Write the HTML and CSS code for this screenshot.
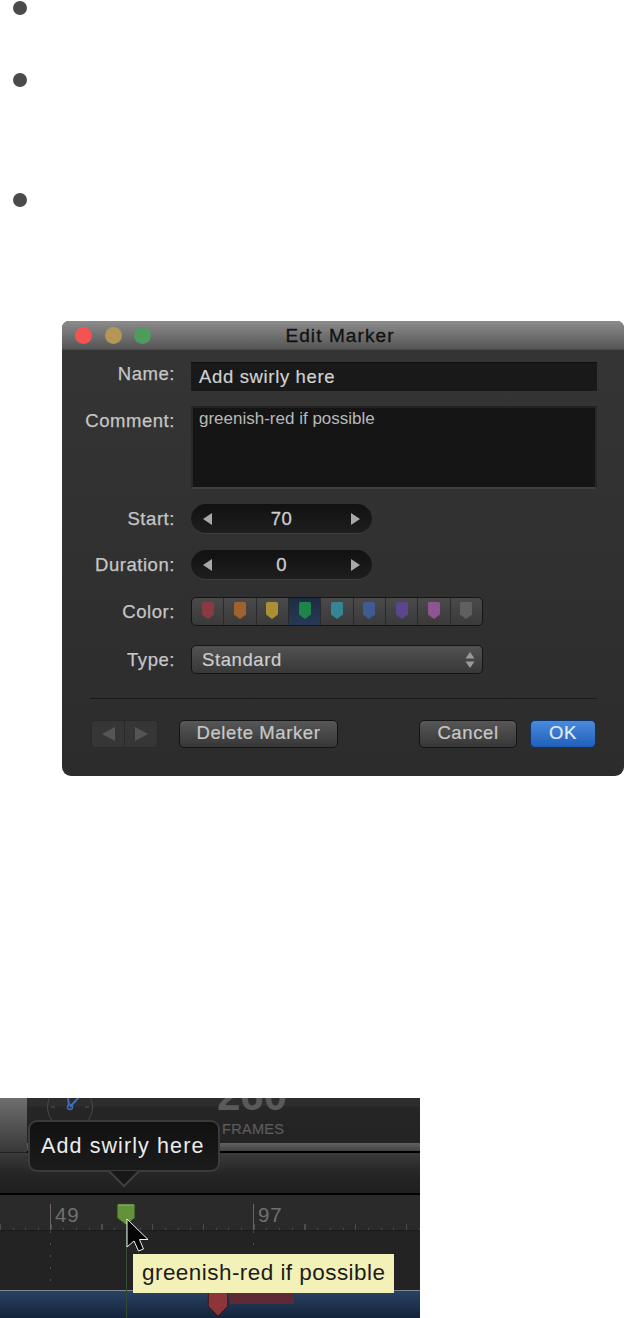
FILE: index.html
```html
<!DOCTYPE html>
<html lang="en">
<head>
<meta charset="utf-8">
<title>Edit Marker</title>
<link rel="stylesheet" href="styles.css">
</head>
<body>
<ul class="bullets">
  <li class="b1"></li>
  <li class="b2"></li>
  <li class="b3"></li>
</ul>

<section class="dialog">
  <header class="titlebar">
    <span class="light red"></span><span class="light amber"></span><span class="light green"></span>
    <h1 class="title">Edit Marker</h1>
  </header>
  <div class="form">
    <div class="row row-name">
      <label class="label">Name:</label>
      <div class="field name-field">Add swirly here</div>
    </div>
    <div class="row row-comment">
      <label class="label label-comment">Comment:</label>
      <div class="field comment-field">greenish-red if possible</div>
    </div>
    <div class="row row-start">
      <label class="label">Start:</label>
      <div class="stepper"><span class="arrow-l"></span><span class="step-val">70</span><span class="arrow-r"></span></div>
    </div>
    <div class="row row-dur">
      <label class="label">Duration:</label>
      <div class="stepper"><span class="arrow-l"></span><span class="step-val">0</span><span class="arrow-r"></span></div>
    </div>
    <div class="row row-color">
      <label class="label">Color:</label>
      <div class="swatches">
        <span class="cell"><svg class="flag" viewBox="0 0 12 17"><path fill="#8a3a40" d="M0 1.500Q0 0 1.500 0H10.500Q12 0 12 1.500V12.500L6 17L0 12.500Z"/></svg></span>
        <span class="cell"><svg class="flag" viewBox="0 0 12 17"><path fill="#a0632f" d="M0 1.500Q0 0 1.500 0H10.500Q12 0 12 1.500V12.500L6 17L0 12.500Z"/></svg></span>
        <span class="cell"><svg class="flag" viewBox="0 0 12 17"><path fill="#ab8f33" d="M0 1.500Q0 0 1.500 0H10.500Q12 0 12 1.500V12.500L6 17L0 12.500Z"/></svg></span>
        <span class="cell cell-on"><svg class="flag" viewBox="0 0 12 17"><path fill="#1d8549" d="M0 1.500Q0 0 1.500 0H10.500Q12 0 12 1.500V12.500L6 17L0 12.500Z"/></svg></span>
        <span class="cell"><svg class="flag" viewBox="0 0 12 17"><path fill="#368594" d="M0 1.500Q0 0 1.500 0H10.500Q12 0 12 1.500V12.500L6 17L0 12.500Z"/></svg></span>
        <span class="cell"><svg class="flag" viewBox="0 0 12 17"><path fill="#405a94" d="M0 1.500Q0 0 1.500 0H10.500Q12 0 12 1.500V12.500L6 17L0 12.500Z"/></svg></span>
        <span class="cell"><svg class="flag" viewBox="0 0 12 17"><path fill="#5a468c" d="M0 1.500Q0 0 1.500 0H10.500Q12 0 12 1.500V12.500L6 17L0 12.500Z"/></svg></span>
        <span class="cell"><svg class="flag" viewBox="0 0 12 17"><path fill="#8f5593" d="M0 1.500Q0 0 1.500 0H10.500Q12 0 12 1.500V12.500L6 17L0 12.500Z"/></svg></span>
        <span class="cell"><svg class="flag" viewBox="0 0 12 17"><path fill="#606062" d="M0 1.500Q0 0 1.500 0H10.500Q12 0 12 1.500V12.500L6 17L0 12.500Z"/></svg></span>
      </div>
    </div>
    <div class="row row-type">
      <label class="label">Type:</label>
      <div class="select">
        <span>Standard</span>
        <svg class="updown" viewBox="0 0 10 16"><path fill="#9a9a9a" d="M5 0L9.500 6.500H.5ZM.5 9.500H9.500L5 16Z"/></svg>
      </div>
    </div>
    <hr class="rule">
    <div class="actions">
      <div class="nav">
        <span class="nav-half"><span class="nav-l"></span></span>
        <span class="nav-half"><span class="nav-r"></span></span>
      </div>
      <button class="btn btn-delete">Delete Marker</button>
      <span class="spring"></span>
      <button class="btn btn-cancel">Cancel</button>
      <button class="btn btn-ok">OK</button>
    </div>
  </div>
</section>

<section class="timeline">
  <div class="band-top">
    <div class="grey-box"></div>
    <div class="top-panel">
      <svg class="clock" viewBox="0 0 48 48"><circle cx="24" cy="9" r="22.500" fill="none" stroke="#484848" stroke-width="1"/><path d="M5 9H9M39 9H43" stroke="#555"/><path d="M24 9L33 -1M22 0L23 7" stroke="#3f6fb5" stroke-width="2" fill="none"/><circle cx="24" cy="9" r="2.500" fill="none" stroke="#3f6fb5" stroke-width="1.500"/></svg>
      <span class="count">260</span>
      <span class="frames">FRAMES</span>
    </div>
  </div>
  <div class="band-bar"></div>
  <div class="band-grad"></div>
  <div class="band-ruler">
    <span class="major m1">49</span>
    <span class="major m2">97</span>
  </div>
  <div class="band-track"></div>
  <div class="band-clip"><span class="clip-red"></span></div>

  <div class="bubble">Add swirly here</div>
  <svg class="bubble-tail" viewBox="0 0 32 17"><path d="M1 0L16 15L31 0" fill="#171717" stroke="#3f3f3f" stroke-width="2"/></svg>
  <span class="playhead"></span>
  <svg class="marker-green" viewBox="0 0 20 23"><path fill="#63923b" stroke="#2a3a1c" d="M1 2Q1 1 2 1H18Q19 1 19 2V15L10 22L1 15Z"/><path d="M2 2H18" stroke="#8fb86a"/></svg>
  <svg class="marker-red" viewBox="0 0 22 28"><path fill="#8e353a" stroke="#3a1a1c" d="M1 0H21V17L11 27L1 17Z"/></svg>
  <svg class="cursor" viewBox="0 0 24 36"><path fill="#050505" stroke="#f4f4f4" stroke-width="1" stroke-linejoin="round" d="M1 1V29L8 23L12.500 33L17.500 31L13.500 21.500H22Z"/></svg>
  <div class="hint">greenish-red if possible</div>
</section>
</body>
</html>
```
FILE: styles.css
```css
* { box-sizing: border-box; }
html, body { margin: 0; padding: 0; background: #fff; }
body {
  width: 625px;
  height: 1318px;
  overflow: hidden;
  font-family: "Liberation Sans", Arial, sans-serif;
}

/* bullets */
.bullets { list-style: none; margin: 0; padding: 1px 0 0 13px; }
.bullets li { width: 14px; height: 14px; border-radius: 50%; background: #4b4b4b; }
.b2 { margin-top: 58px; }
.b3 { margin-top: 106px; }

/* dialog */
.dialog {
  margin: 114px 0 0 62px;
  width: 562px;
  height: 455px;
  border-radius: 7px 7px 9px 9px;
  overflow: hidden;
  background: linear-gradient(#353535, #2c2c2c);
}
.titlebar {
  height: 29px;
  display: flex;
  align-items: center;
  gap: 12.500px;
  padding-left: 13px;
  position: relative;
  background: linear-gradient(#8c8c8c, #565656);
  border-bottom: 1px solid #4a4a4a;
}
.light { width: 17px; height: 17px; border-radius: 50%; }
.light.red { background: #f65252; }
.light.amber { background: #b79458; }
.light.green { background: #4f9b5e; }
.title {
  position: absolute;
  left: 0; right: 6px; top: 4px;
  margin: 0;
  text-align: center;
  font-size: 19px;
  line-height: 22px;
  font-weight: 400;
  color: #111;
  letter-spacing: 1.100px;
  -webkit-text-stroke: .3px #111;
}
.form { padding: 12px 27px 0 0; }
.row { display: flex; align-items: center; }
.label {
  width: 113px;
  margin-right: 16px;
  text-align: right;
  font-size: 18.500px;
  letter-spacing: .55px;
  color: #c6c6c6;
  flex: none;
  -webkit-text-stroke: .25px #c6c6c6;
}
.row-name .label { padding-bottom: 6px; }
.field { background: #191919; color: #d0d0d0; }
.name-field {
  width: 406px;
  height: 29px;
  padding: 3px 0 0 8px;
  font-size: 18.500px;
  line-height: 21px;
  letter-spacing: .65px;
  border-top: 1px solid #0f0f0f;
  -webkit-text-stroke: .2px #d0d0d0;
}
.row-comment { margin-top: 15px; align-items: flex-start; }
.label-comment { padding-top: 4px; }
.comment-field {
  width: 407px;
  height: 83px;
  padding: 1px 0 0 6px;
  font-size: 17px;
  line-height: 20px;
  color: #b9b9b9;
  background: #151515;
  border: 2px solid #282828;
  border-top-color: #222;
  border-bottom-color: #404040;
}
.row-start { margin-top: 15px; }
.row-dur { margin-top: 16px; }
.stepper {
  width: 181px;
  height: 30px;
  border-radius: 15px;
  background: linear-gradient(#111, #1e1e1e);
  border-bottom: 1px solid #3f3f3f;
  display: flex;
  align-items: center;
  justify-content: space-between;
  padding: 0 12px;
}
.step-val { font-size: 18.500px; color: #cfcfcf; letter-spacing: .4px; -webkit-text-stroke: .3px #cfcfcf; }
.arrow-l, .arrow-r, .nav-l, .nav-r { display: block; width: 0; height: 0; border-style: solid; }
.arrow-l { border-width: 6px 9px 6px 0; border-color: transparent #a8a8a8 transparent transparent; }
.arrow-r { border-width: 6px 0 6px 9px; border-color: transparent transparent transparent #a8a8a8; }

.row-color { margin-top: 17px; }
.swatches {
  width: 292px;
  height: 29px;
  display: flex;
  border: 1px solid #151515;
  border-radius: 5px;
  overflow: hidden;
  background: linear-gradient(#4a4a4a, #3a3a3a);
}
.cell {
  flex: 1;
  display: flex;
  justify-content: center;
  padding-top: 4px;
  border-right: 1px solid #2a2a2a;
}
.cell:last-child { border-right: 0; }
.cell-on { background: linear-gradient(#1e2c42, #263a55); }
.flag { width: 12px; height: 17px; display: block; }

.row-type { margin-top: 19px; }
.select {
  width: 292px;
  height: 29px;
  border: 1px solid #151515;
  border-radius: 5px;
  background: linear-gradient(#525252, #383838);
  display: flex;
  align-items: center;
  justify-content: space-between;
  padding: 0 7px 0 10px;
  font-size: 18.500px;
  letter-spacing: .6px;
  color: #cdcdcd;
  -webkit-text-stroke: .2px #cdcdcd;
}
.updown { width: 10px; height: 18px; display: block; }
.rule {
  margin: 24px 0 0 28px;
  width: 507px;
  height: 1px;
  border: 0;
  background: #1a1a1a;
}
.actions { display: flex; align-items: stretch; margin: 21px 1px 0 29px; height: 28px; }
.nav {
  width: 67px;
  display: flex;
  border: 1px solid #292929;
  border-radius: 4px;
  background: #363636;
}
.nav-half { flex: 1; display: flex; align-items: center; justify-content: center; }
.nav-half + .nav-half { border-left: 1px solid #2a2a2a; }
.nav-l { border-width: 7px 13px 7px 0; border-color: transparent #555 transparent transparent; }
.nav-r { border-width: 7px 0 7px 13px; border-color: transparent transparent transparent #555; }
.btn {
  font: inherit;
  font-size: 18.500px;
  letter-spacing: .6px;
  color: #c8c8c8;
  border: 1px solid #141414;
  border-radius: 5px;
  padding: 0 0 2px;
  background: linear-gradient(#575757, #373737);
  -webkit-text-stroke: .2px currentColor;
}
.btn-delete { width: 159px; margin-left: 21px; }
.spring { flex: 1; }
.btn-cancel { width: 98px; }
.btn-ok {
  width: 66px;
  margin-left: 13px;
  color: #e4ecf6;
  border-color: #14305c;
  background: linear-gradient(#4a8bdc, #1f5fbb);
}

/* timeline */
.timeline {
  position: relative;
  margin-top: 322px;
  width: 420px;
  height: 220px;
  overflow: hidden;
  background: #222;
}
.band-top { height: 45px; display: flex; }
.grey-box {
  width: 27px;
  height: 54px;
  flex: none;
  background: linear-gradient(#6e6e6e, #383838);
}
.top-panel {
  flex: 1;
  position: relative;
  overflow: hidden;
  background: linear-gradient(#2d2d2d 0, #2d2d2d 8px, #262626 9px, #232323);
}
.clock { position: absolute; left: 19px; top: 0; width: 48px; height: 48px; }
.count {
  position: absolute;
  left: 190px;
  top: -23px;
  font-size: 42px;
  line-height: 42px;
  font-weight: 700;
  letter-spacing: 0;
  color: #5a5a5a;
}
.frames {
  position: absolute;
  left: 195px;
  top: 24px;
  font-size: 14.500px;
  line-height: 15px;
  letter-spacing: .3px;
  color: #5c5c5c;
  -webkit-text-stroke: .2px #5c5c5c;
}
.band-bar {
  height: 10px;
  margin-left: 27px;
  background: linear-gradient(#626262, #444 85%, #000 85%);
  border-bottom: 1px solid #000;
}
.band-grad {
  height: 42px;
  background: linear-gradient(#3a3a3a, #262626 50%, #1f1f1f);
  border-bottom: 2px solid #000;
}
.band-ruler {
  position: relative;
  height: 36px;
  border-bottom: 1px solid #1b1b1b;
  background:
    repeating-linear-gradient(90deg, #4c4c4c 0 1px, transparent 1px 12.690px) 0 bottom / 100% 2px no-repeat,
    repeating-linear-gradient(90deg, #4c4c4c 0 1px, transparent 1px 50.750px) 0 bottom / 100% 6px no-repeat,
    #2a2a2a;
}
.major {
  position: absolute;
  bottom: 0;
  height: 26px;
  border-left: 1px solid #666;
  padding-left: 4px;
  font-size: 20.500px;
  line-height: 22px;
  letter-spacing: .8px;
  color: #707070;
}
.m1 { left: 50px; }
.m2 { left: 253px; }
.band-track {
  height: 59px;
  background:
    repeating-linear-gradient(#4c4c4c 0 2px, transparent 2px 12px) 50px 0 / 1px 100% no-repeat,
    repeating-linear-gradient(#4c4c4c 0 2px, transparent 2px 12px) 253px 0 / 1px 100% no-repeat,
    #232323;
}
.band-clip {
  position: relative;
  height: 28px;
  border-top: 1px solid #7f8791;
  background: linear-gradient(#2a4263, #14233b);
}
.clip-red {
  position: absolute;
  left: 230px;
  top: 3px;
  width: 64px;
  height: 10px;
  background: #5e2a35;
}
.bubble {
  position: absolute;
  left: 28px;
  top: 22px;
  width: 192px;
  height: 52px;
  border: 2px solid #3b3b3b;
  border-radius: 9px;
  background: linear-gradient(#111, #1b1b1b);
  color: #ececec;
  font-size: 21.500px;
  line-height: 49px;
  letter-spacing: 1.100px;
  padding-left: 11px;
}
.bubble-tail { position: absolute; left: 108px; top: 73px; width: 32px; height: 17px; }
.playhead { position: absolute; left: 126px; top: 110px; width: 1px; height: 110px; background: #344a33; }
.marker-green { position: absolute; left: 116px; top: 105px; width: 20px; height: 23px; }
.marker-red { position: absolute; left: 207px; top: 192px; width: 22px; height: 27px; }
.cursor { position: absolute; left: 126px; top: 120px; width: 24px; height: 36px; }
.hint {
  position: absolute;
  left: 133px;
  top: 156px;
  width: 261px;
  height: 39px;
  padding-left: 9px;
  background: #f3f1b8;
  color: #1c1c1c;
  font-size: 22.500px;
  line-height: 38px;
  letter-spacing: .45px;
  white-space: nowrap;
}
```
